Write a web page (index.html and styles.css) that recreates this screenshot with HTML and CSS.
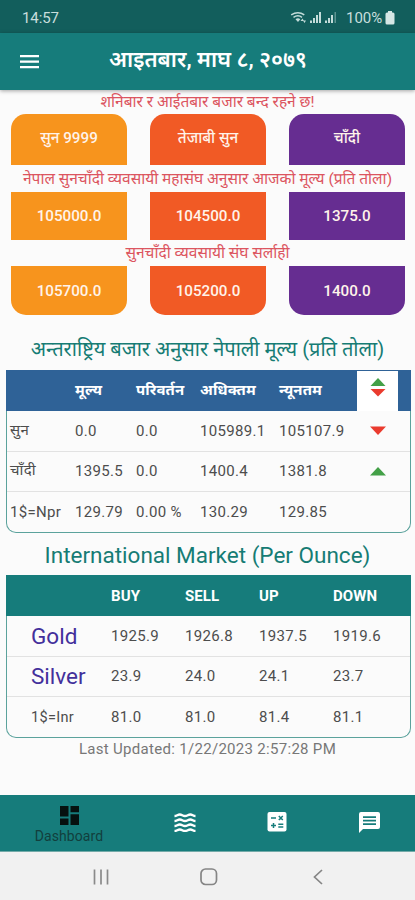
FILE: index.html
```html
<!DOCTYPE html>
<html lang="hi">
<head>
<meta charset="utf-8">
<meta name="viewport" content="width=device-width, initial-scale=1">
<title>आइतबार, माघ ८, २०७९</title>
<link rel="stylesheet" href="styles.css">
</head>
<body>
<div class="status">
  <span class="clock">14:57</span>
  <svg class="signals" width="50" height="16" viewBox="0 0 50 16">
    <g fill="none" stroke="#c3dcda" stroke-width="1.5">
      <path d="M1.2 4.8Q8 .5 14.3 4.8M3.5 7.3Q8 4.3 12 7.3"/>
    </g>
    <path fill="#c3dcda" d="M5.5 9.2Q8 7.5 10.3 9.2L8 12zM10.5 11l2-2.5 1.500 2.500zM13 10.500h3l-1.500 2.500z"/>
    <path fill="#c3dcda" d="M20 10.500h2V13h-2zM23 8h2v5h-2zM26 5h2v8h-2zM29 2h2v11h-2zM35 10.500h2V13h-2zM38 8h2v5h-2zM41 5h2v8h-2z"/>
    <path fill="#5d9491" d="M44.500 2h1.500v11h-1.500z"/>
  </svg>
  <span class="percent">100%</span>
  <svg class="battery" width="10" height="14" viewBox="0 0 10 14"><path fill="#d5e7e5" d="M3 0h4v1.500h1q1.500 0 1.500 1.500v9q0 1.500-1.500 1.500H2Q.5 13.500.5 12V3Q.5 1.500 2 1.500h1z"/></svg>
</div>
<header class="appbar">
  <svg class="menu" width="20" height="14" viewBox="0 0 20 14"><path fill="#fff" d="M0 0h19v2.200H0zM0 5.500h19v2.200H0zM0 11h19v2.200H0z"/></svg>
  <h1>आइतबार, माघ ८, २०७९</h1>
</header>
<main>
  <p class="note note-top"><span>शनिबार र आईतबार बजार बन्द रहने छ!</span></p>
  <div class="tiles tiles-top">
    <div class="tile gold">सुन 9999</div><div class="tile orange">तेजाबी सुन</div><div class="tile purple">चाँदी</div>
  </div>
  <p class="note note-fed"><span>नेपाल सुनचाँदी व्यवसायी महासंघ अनुसार आजको मूल्य (प्रति तोला)</span></p>
  <div class="tiles tiles-mid">
    <div class="tile gold">105000.0</div><div class="tile orange">104500.0</div><div class="tile purple">1375.0</div>
  </div>
  <p class="note note-local"><span>सुनचाँदी व्यवसायी संघ सर्लाही</span></p>
  <div class="tiles tiles-end">
    <div class="tile gold">105700.0</div><div class="tile orange">105200.0</div><div class="tile purple">1400.0</div>
  </div>
  <h2 class="title-ne"><span>अन्तराष्ट्रिय बजार अनुसार नेपाली मूल्य (प्रति तोला)</span></h2>
  <section class="table rates">
    <div class="row head"><span></span><span>मूल्य</span><span>परिवर्तन</span><span>अधिक्तम</span><span>न्यूनतम</span>
      <span class="arrow both"><svg width="16" height="19" viewBox="0 0 16 19"><path fill="#43a047" d="M8 0l7.500 8H.5z"/><path fill="#ea3b2e" d="M.5 11h15L8 18.500z"/></svg></span></div>
    <div class="row"><span>सुन</span><span>0.0</span><span>0.0</span><span>105989.1</span><span>105107.9</span>
      <span class="arrow"><svg width="16" height="9" viewBox="0 0 16 9"><path fill="#ea3b2e" d="M0 .5h16L8 9z"/></svg></span></div>
    <div class="row"><span>चाँदी</span><span>1395.5</span><span>0.0</span><span>1400.4</span><span>1381.8</span>
      <span class="arrow"><svg width="16" height="9" viewBox="0 0 16 9"><path fill="#43a047" d="M8 0l8 8.500H0z"/></svg></span></div>
    <div class="row"><span>1$=Npr</span><span>129.79</span><span>0.00 %</span><span>130.29</span><span>129.85</span><span></span></div>
  </section>
  <h2 class="title-en">International Market (Per Ounce)</h2>
  <section class="table ounce">
    <div class="row head"><span></span><span>BUY</span><span>SELL</span><span>UP</span><span>DOWN</span></div>
    <div class="row"><span class="metal">Gold</span><span>1925.9</span><span>1926.8</span><span>1937.5</span><span>1919.6</span></div>
    <div class="row"><span class="metal">Silver</span><span>23.9</span><span>24.0</span><span>24.1</span><span>23.7</span></div>
    <div class="row"><span class="inr">1$=Inr</span><span>81.0</span><span>81.0</span><span>81.4</span><span>81.1</span></div>
  </section>
  <p class="updated">Last Updated: 1/22/2023 2:57:28 PM</p>
</main>
<nav class="tabs">
  <div class="tab active"><svg width="19" height="19" viewBox="0 0 19 19"><path fill="#06110f" d="M0 0h8.500v10.500H0zM10.500 0H19v6.200h-8.500zM0 12.500h8.500V19H0zM10.500 8.200H19V19h-8.500z"/></svg><span>Dashboard</span></div>
  <div class="tab"><svg width="22" height="19" viewBox="0 0 22 19"><g fill="none" stroke="#fff" stroke-width="2.300"><path d="M.5 3C3 3 3.500 1.500 5.800 1.500S8.500 3 11 3s3-1.500 5.300-1.500S19 3 21.500 3"/><path d="M.5 8C3 8 3.500 6.500 5.800 6.500S8.500 8 11 8s3-1.500 5.300-1.500S19 8 21.500 8"/><path d="M.5 13c2.500 0 3-1.500 5.300-1.500S8.500 13 11 13s3-1.500 5.300-1.500S19 13 21.500 13"/><path d="M.5 18c2.500 0 3-1.500 5.300-1.500S8.500 18 11 18s3-1.500 5.300-1.500S19 18 21.500 18"/></g></svg></div>
  <div class="tab"><svg width="20" height="20" viewBox="0 0 20 20"><rect width="19" height="19.500" x=".5" rx="2" fill="#fff"/><path fill="none" stroke="#167c7b" stroke-width="1.500" d="M4 6h5M11.800 4l4 4M15.800 4l-4 4M4 13.500h5M6.500 11v5M11.300 12.300h5M11.300 15h5"/></svg></div>
  <div class="tab"><svg width="21" height="21" viewBox="0 0 21 21"><path fill="#fff" d="M2 0h17q2 0 2 2v13q0 2-2 2H4l-4 4V2Q0 0 2 0z"/><path stroke="#167c7b" stroke-width="1.800" d="M4 5.200h13M4 8.700h13M4 12.200h13"/></svg></div>
</nav>
<div class="system">
  <svg width="16" height="16" viewBox="0 0 16 16"><path stroke="#8a8a8a" stroke-width="1.700" d="M1.500 .5v15M8 .5v15M14.500 .5v15"/></svg>
  <svg width="18" height="18" viewBox="0 0 18 18"><rect x="1" y="1" width="15.500" height="15.500" rx="4.500" fill="none" stroke="#858585" stroke-width="1.700"/></svg>
  <svg width="10" height="16" viewBox="0 0 10 16"><path fill="none" stroke="#858585" stroke-width="1.700" d="M9 1L1.500 8 9 15"/></svg>
</div>
</body>
</html>
```
FILE: styles.css
```css
* { box-sizing: border-box; }
body {
  margin: 0;
  width: 415px;
  height: 900px;
  overflow: hidden;
  display: flex;
  flex-direction: column;
  background: #fbfbfb;
  font-family: Roboto, "Noto Sans Devanagari", "Noto Sans", sans-serif;
  color: #4d4d4d;
}
h1, h2, p { margin: 0; font-weight: 400; white-space: nowrap; }
svg { display: block; flex: none; }
.status {
  height: 33px;
  flex: none;
  display: flex;
  align-items: center;
  background: #125e5c;
  color: #c8dedc;
  padding: 2px 20px 0 22px;
  font-size: 15px;
}
.clock { flex: 1; letter-spacing: -.1px; }
.percent { margin: 0 3px 0 6px; width: 36px; font-size: 15px; }
.appbar {
  height: 57px;
  flex: none;
  display: flex;
  align-items: center;
  background: #167c7b;
  box-shadow: 0 1px 4px rgba(0, 0, 0, .35);
  padding: 0 20px;
}
h1 { margin-left: 69px; font-size: 22px; font-weight: 600; color: #fff; line-height: 30px; margin-top: -3px; }
main { flex: 1; display: flex; flex-direction: column; }
.note {
  display: flex;
  align-items: center;
  justify-content: center;
  color: #dc5560;
  font-size: 15.5px;
  line-height: 24px;
}
.note-top { height: 24px; }
.note-fed { height: 27px; }
.note-local { height: 26px; }
.tiles { display: grid; grid-template-columns: repeat(3, 116px); gap: 23px; padding-left: 11px; }
.tile { height: 100%; display: flex; align-items: center; justify-content: center; color: #fff3ea; font-size: 15.200px; font-weight: 500; }
.tiles-top { height: 51px; }
.tiles-mid { height: 48px; }
.tiles-end { height: 49px; }
.tiles-top .tile { border-radius: 15px 15px 0 0; padding-bottom: 2px; }
.tiles-end .tile { border-radius: 0 0 15px 15px; }
.gold { background: #f7941d; }
.orange { background: #f15a25; }
.purple { background: #662d91; }
h2 { display: flex; align-items: center; justify-content: center; color: #167c74; }
.title-ne { height: 55px; padding-top: 15px; font-size: 20px; }
.title-en { height: 42px; padding-top: 2px; font-size: 22.500px; }
.table { width: 405px; height: 163px; margin-left: 6px; border: 1px solid #5ba29c; border-top: 0; border-radius: 0 0 10px 10px; }
.row { display: grid; height: 40.500px; align-items: center; font-size: 15px; letter-spacing: .3px; border-bottom: 1px solid #e2e2e2; white-space: nowrap; }
.row:last-child { border-bottom: 0; }
.rates .row { grid-template-columns: 65px 61px 64px 79px 78px 41px; padding-left: 3px; }
.rates .row > .arrow { height: 100%; display: flex; align-items: center; justify-content: center; }
.row.head { height: 41px; margin: 0 -1px; border: 0; color: #fff; font-weight: 700; letter-spacing: .1px; }
.rates .row.head { background: #2f6297; padding-left: 4px; }
.rates .row > .both { background: #fff; padding-bottom: 8px; margin-top: 1px; height: 40px; }
.ounce .row { grid-template-columns: 80px 74px 74px 74px 70px; padding-left: 24px; }
.ounce .row.head { background: #167c7b; padding-left: 25px; }
.ounce .row .metal { color: #43309b; font-size: 22.500px; letter-spacing: 0; }
.inr { font-size: 14.500px; }
.updated { text-align: center; color: #777; font-size: 15px; line-height: 23px; letter-spacing: .3px; }
.tabs { height: 57px; flex: none; display: grid; grid-template-columns: 138px repeat(3, 92.300px); background: #167c7b; border-bottom: 1px solid #73aaa8; }
.tab { display: flex; flex-direction: column; align-items: center; justify-content: center; padding: 0 0 2px 2px; }
.tab.active { color: #123f3d; font-size: 14px; line-height: 18px; padding: 4px 0 0; }
.active span { letter-spacing: .1px; }
.active svg { margin-bottom: 2px; }
.system { height: 48px; flex: none; display: flex; align-items: center; gap: 91px; padding: 2px 0 0 93px; background: #f1f1f1; }
.system svg:last-child { margin-left: 4px; }
```
